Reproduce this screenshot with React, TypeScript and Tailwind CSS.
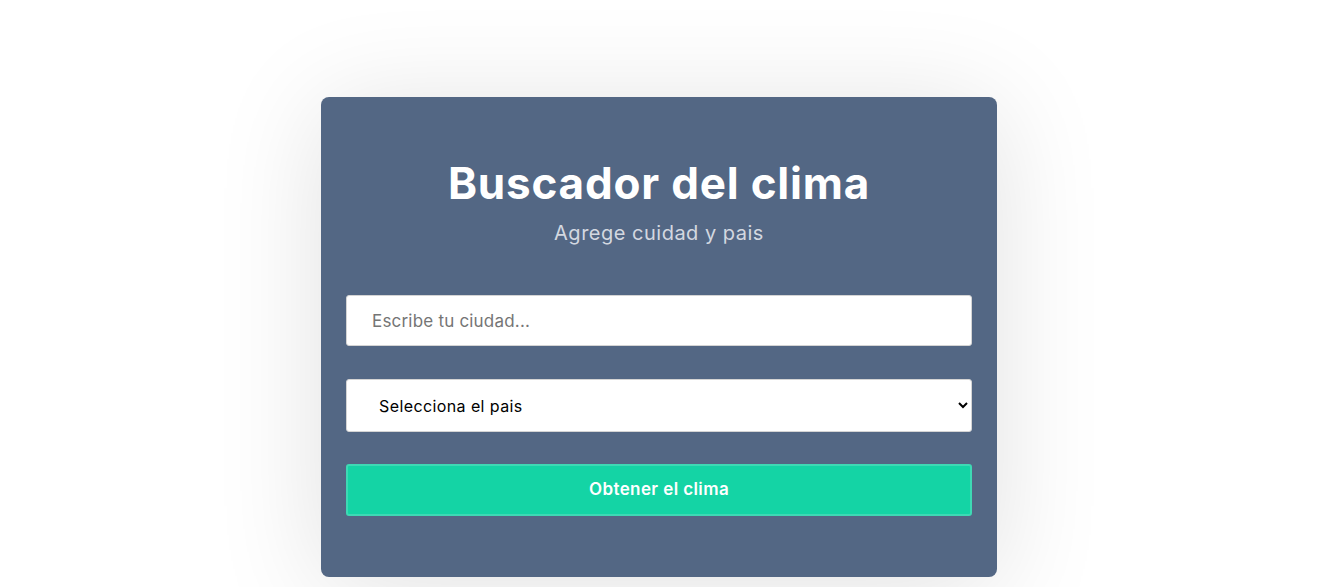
import React, { useState } from "react";

const App = () => {
  const [city, setCity] = useState("");
  const [country, setCountry] = useState("");

  return (
    <div className="min-h-[587px] bg-white flex justify-center pt-[97px] pr-[14px] font-['Inter',sans-serif]">
      <form
        onSubmit={(e) => e.preventDefault()}
        className="w-[676px] h-[480px] bg-[#536784] rounded-lg px-[25px] pt-[61px] shadow-[0_10px_110px_rgba(0,0,0,0.12)] flex flex-col"
      >
        <h1 className="text-center text-white text-[44px] leading-[50px] font-bold tracking-[0.8px]">
          Buscador del clima
        </h1>
        <p className="text-center text-[#d3d8e0] text-[20px] leading-[28px] mt-[11px] tracking-[0.5px]">
          Agrege cuidad y pais
        </p>

        <input
          type="text"
          value={city}
          onChange={(e) => setCity(e.target.value)}
          placeholder="Escribe tu ciudad..."
          className="mt-[48px] h-[51px] w-full bg-white rounded-[3px] border border-[#d4d4d4] px-[25px] text-[17px] tracking-[0.2px] text-gray-800 placeholder:text-[#757575] outline-none"
        />

        <select
          value={country}
          onChange={(e) => setCountry(e.target.value)}
          className="mt-[33px] h-[53px] w-full bg-white rounded-[3px] border border-[#d4d4d4] pl-[28px] pr-[9px] text-[16px] tracking-[0.4px] text-black outline-none"
        >
          <option value="">Selecciona el pais</option>
          <option value="MX">México</option>
          <option value="AR">Argentina</option>
          <option value="CO">Colombia</option>
          <option value="ES">España</option>
        </select>

        <button
          type="submit"
          className="mt-[32px] h-[52px] w-full bg-[#14d4a5] border-2 border-[#3ed9b4] rounded-[3px] text-white text-[17px] tracking-[0.4px] font-semibold"
        >
          Obtener el clima
        </button>
      </form>
    </div>
  );
};

export default App;
